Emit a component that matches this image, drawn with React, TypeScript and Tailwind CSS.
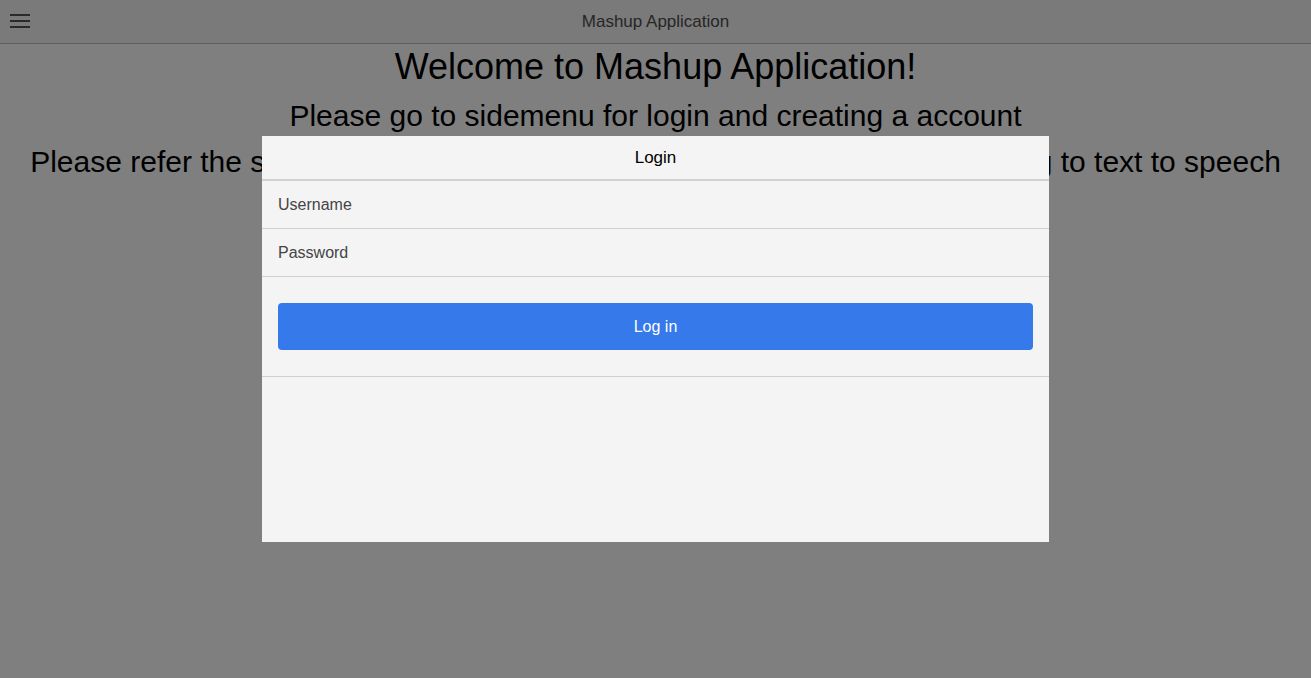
export default function App() {
  return (
    <div className="relative h-[678px] w-[1311px] overflow-hidden bg-[#7f7f7f] font-['Liberation_Sans',Arial,sans-serif]">
      <header className="relative flex h-[44px] items-center justify-center border-b border-[#5e5e5e] bg-[#7a7a7a]">
        <button className="absolute left-[10px] top-[14px] flex w-[20px] flex-col gap-[4px]">
          <span className="h-[2px] w-[20px] bg-[#2a2a2a]" />
          <span className="h-[2px] w-[20px] bg-[#2a2a2a]" />
          <span className="h-[2px] w-[20px] bg-[#2a2a2a]" />
        </button>
        <h2 className="text-[17px] text-[#262626]">Mashup Application</h2>
      </header>

      <main className="flex flex-col items-center text-center text-black">
        <h1 className="mt-[1px] text-[36px] leading-[44px]">Welcome to Mashup Application!</h1>
        <h2 className="mt-[7px] text-[30px] leading-[40px]">Please go to sidemenu for login and creating a account</h2>
        <h3 className="mt-[6px] whitespace-nowrap text-[30px] leading-[40px]">
          Please refer the side menu for converting the images into text and converting to text to speech
        </h3>
      </main>

      <div className="absolute left-[262px] top-[136px] flex h-[406px] w-[787px] flex-col bg-[#f4f4f4]">
        <div className="flex h-[45px] items-center justify-center border-b-2 border-[#d2d2d2] text-[17px] text-black">
          Login
        </div>
        <div className="flex h-[48px] items-center border-b border-[#d0d0d0] px-[16px] text-[16px] text-[#444]">
          Username
        </div>
        <div className="flex h-[48px] items-center border-b border-[#d0d0d0] px-[16px] text-[16px] text-[#444]">
          Password
        </div>
        <div className="border-b border-[#d0d0d0] px-[16px] pb-[26px] pt-[26px]">
          <button className="flex h-[47px] w-full items-center justify-center rounded-[4px] bg-[#3579ea] text-[16px] text-white">
            Log in
          </button>
        </div>
      </div>
    </div>
  );
}
